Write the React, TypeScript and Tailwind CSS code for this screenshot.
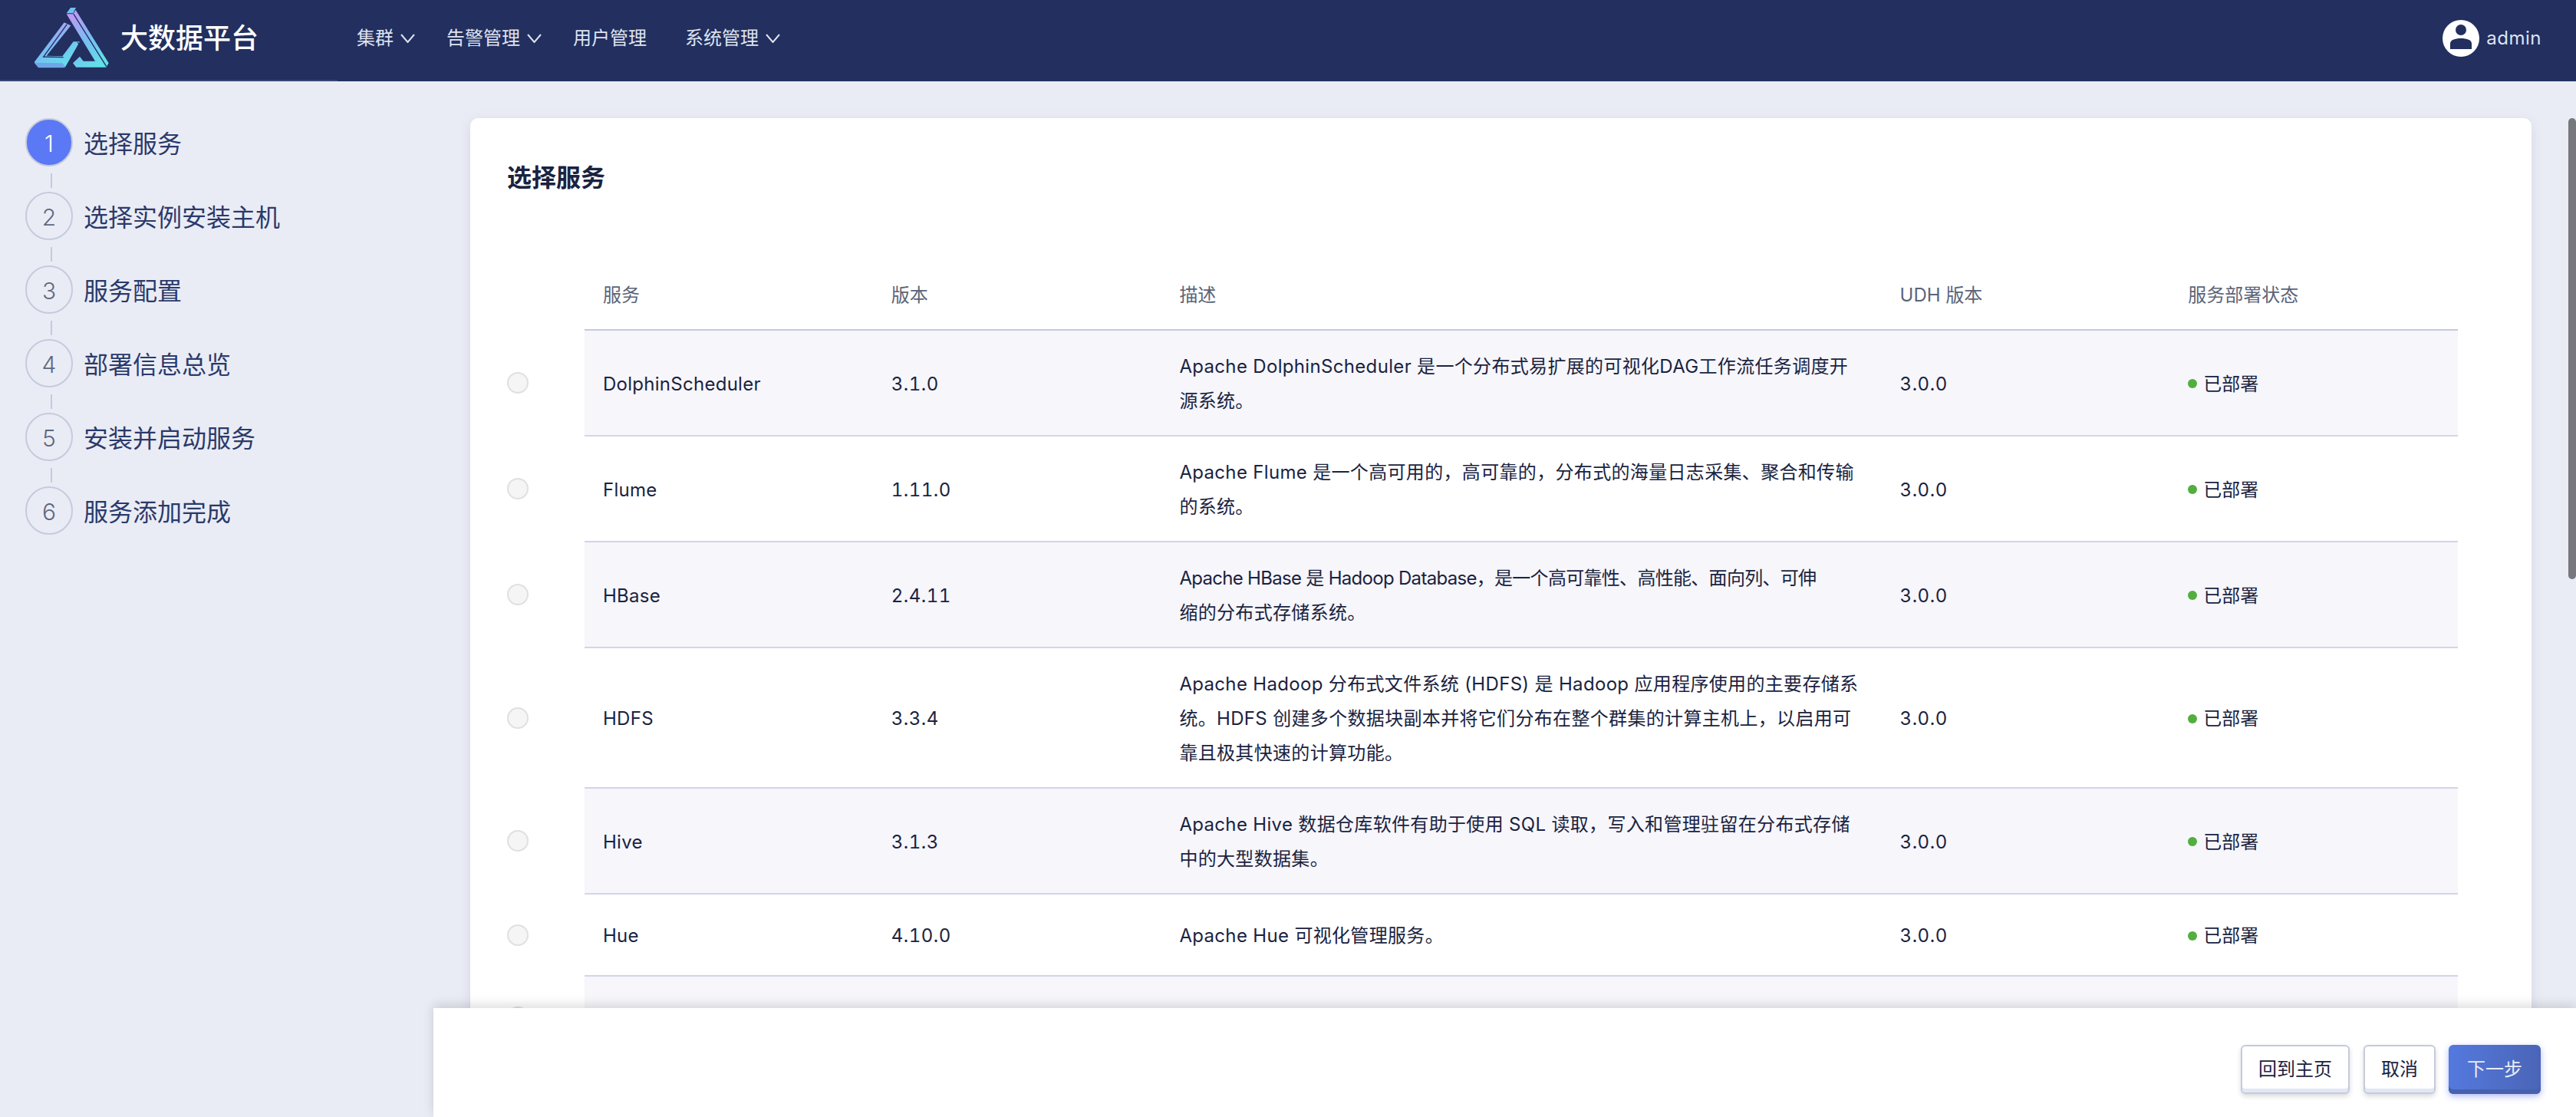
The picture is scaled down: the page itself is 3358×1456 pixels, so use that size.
const steps = ['选择服务', '选择实例安装主机', '服务配置', '部署信息总览', '安装并启动服务', '服务添加完成'];

const services = [
  { name: 'DolphinScheduler', version: '3.1.0', desc: ['Apache DolphinScheduler 是一个分布式易扩展的可视化DAG工作流任务调度开', '源系统。'] },
  { name: 'Flume', version: '1.11.0', desc: ['Apache Flume 是一个高可用的，高可靠的，分布式的海量日志采集、聚合和传输', '的系统。'] },
  { name: 'HBase', version: '2.4.11', desc: ['Apache HBase 是 Hadoop Database，是一个高可靠性、高性能、面向列、可伸', '缩的分布式存储系统。'], tight: true },
  { name: 'HDFS', version: '3.3.4', desc: ['Apache Hadoop 分布式文件系统 (HDFS) 是 Hadoop 应用程序使用的主要存储系', '统。HDFS 创建多个数据块副本并将它们分布在整个群集的计算主机上，以启用可', '靠且极其快速的计算功能。'] },
  { name: 'Hive', version: '3.1.3', desc: ['Apache Hive 数据仓库软件有助于使用 SQL 读取，写入和管理驻留在分布式存储', '中的大型数据集。'] },
  { name: 'Hue', version: '4.10.0', desc: ['Apache Hue 可视化管理服务。'] },
  { name: 'Kafka', version: '2.8.1', desc: ['Apache Kafka 分布式消息系统。'] },
];

function Logo() {
  return (
    <svg viewBox="0 0 336 270" className="w-[112px] h-[90px] shrink-0">
      <defs>
        <linearGradient id="logoFill" x1="0.25" y1="0" x2="0.8" y2="1">
          <stop offset="0" stopColor="#c09af5" />
          <stop offset="0.5" stopColor="#78bdf2" />
          <stop offset="1" stopColor="#5fe3e8" />
        </linearGradient>
      </defs>
      <polygon points="140,37 156,15 177,15 166,37" fill="#6fc3ee" />
      <polygon points="140,40 166,40 176,24 305,232 295,248 178,248 165,232 192,206 206,224 252,224" fill="url(#logoFill)" />
      <polygon points="131,73 157,85 62,203 124,205 167,148 192,148 136,246 28,246 14,228" fill="url(#logoFill)" />
      <polygon points="14,230 124,232 136,246 132,250 30,250" fill="#6fa6e8" />
      <path d="M142 80 L50 207 L128 209 M168 40 L296 245 M184 150 L205 186 M148 236 L178 208" stroke="#222f5f" strokeWidth="4" fill="none" />
    </svg>
  );
}

function UserIcon() {
  return (
    <svg viewBox="0 0 48 48" className="w-12 h-12 shrink-0">
      <circle cx="24" cy="24" r="24" fill="#fff" />
      <circle cx="24" cy="13" r="7" fill="#222f5f" />
      <path d="M10 38 V31 C10 26 16 24 24 24 C32 24 38 26 38 31 V38 Z" fill="#222f5f" />
    </svg>
  );
}

function NavItem({ label, menu = true }: { label: string; menu?: boolean }) {
  return (
    <div className="flex items-center text-2xl text-[#dfe3ef]">
      <span>{label}</span>
      {menu && (
        <svg viewBox="0 0 19 12" className="w-[19px] h-3 ml-[9px]">
          <path d="M1 1 L9.5 11 L18 1" fill="none" stroke="currentColor" strokeWidth="2" />
        </svg>
      )}
    </div>
  );
}

function Step({ n, label, last }: { n: number; label: string; last: boolean }) {
  const active = n === 1;
  return (
    <div>
      <div className="flex items-center">
        <div
          className={
            'w-[62px] h-[63px] pt-[3px] rounded-full border-2 border-[#c5cbdd] flex items-center justify-center text-[30px] font-light ' +
            (active ? 'bg-[#5b78f5] text-white' : 'text-[#5d6880]')
          }
        >
          {n}
        </div>
        <span className="ml-[14px] pt-1 text-[32px] text-[#2a3a6b]">{label}</span>
      </div>
      {!last && <div className="ml-[33px] mt-[9px] mb-[5px] w-[2px] h-[19px] bg-[#c5cbdd]" />}
    </div>
  );
}

export default function App() {
  return (
    <div className="relative flex flex-col h-[1456px] overflow-hidden bg-[#eaecf5] font-['Inter','Noto_Sans_CJK_SC',sans-serif]">
      <header className="flex items-center h-[106px] shrink-0 pl-[40px] pr-[45px] pb-[6px] bg-[#222f5f]">
        <Logo />
        <div className="ml-[5px] w-[181px] text-[36px] font-medium text-white whitespace-nowrap">大数据平台</div>
        <nav className="ml-[127px] flex items-center gap-[41px]">
          <NavItem label="集群" />
          <NavItem label="告警管理" />
          <div className="mr-[9px]">
            <NavItem label="用户管理" menu={false} />
          </div>
          <NavItem label="系统管理" />
        </nav>
        <div className="ml-auto flex items-center gap-[9px]">
          <UserIcon />
          <span className="text-2xl tracking-[0.5px] text-[#dfe3ef]">admin</span>
        </div>
      </header>
      <div className="w-[440px] h-[2px] -mt-[2px] bg-[#3b4675]" />

      <div className="flex flex-1 min-h-0">
        <aside className="w-[440px] shrink-0 pt-12 pl-[33px]">
          {steps.map((s, i) => (
            <Step key={s} n={i + 1} label={s} last={i === steps.length - 1} />
          ))}
        </aside>

        <main className="ml-[173px] mr-[58px] mt-12 flex-1 bg-white rounded-t-[10px] shadow-[0_4px_16px_rgba(30,40,80,0.1)] pl-12 pr-24">
          <h2 className="pt-[54px] text-[32px] leading-12 font-semibold text-[#1a2340]">选择服务</h2>
          <div className="mt-[83px] pl-[101px]">
            <div className="grid grid-cols-[2fr_2fr_5fr_2fr_2fr] items-center h-[92px] pt-[2px] border-b-2 border-[#c5cbdd] text-2xl text-[#5b6478]">
              <div className="px-6">服务</div>
              <div className="px-6">版本</div>
              <div className="px-6">描述</div>
              <div className="px-6">UDH 版本</div>
              <div className="px-6">服务部署状态</div>
            </div>
            {services.map((s, i) => (
              <div
                key={s.name}
                className={
                  'relative grid grid-cols-[2fr_2fr_5fr_2fr_2fr] items-center min-h-[107px] pt-6 pb-[22px] border-b-2 border-[#d2d5e8] text-2xl leading-[45px] text-[#1a2340] ' +
                  (i % 2 === 0 ? 'bg-[#f6f6fb]' : 'bg-white')
                }
              >
                <span className="absolute -left-[101px] top-1/2 -mt-[14px] w-7 h-7 rounded-full bg-[#f5f5f5] border-2 border-[#e0e0e2]" />
                <div className="px-6 tracking-[0.27px]">{s.name}</div>
                <div className="px-6 tracking-[0.5px] tabular-nums">{s.version}</div>
                <div className="pl-6 tracking-[0.33px] whitespace-nowrap">
                  {s.desc.map((line, j) => (
                    <div key={j} className={s.tight && j === 0 ? 'tracking-[-0.7px]' : ''}>
                      {line}
                    </div>
                  ))}
                </div>
                <div className="px-6 tracking-[0.5px] tabular-nums">3.0.0</div>
                <div className="px-6 flex items-center">
                  <span className="w-3 h-3 rounded-full bg-[#52ae3f] mr-[8px]" />
                  已部署
                </div>
              </div>
            ))}
          </div>
        </main>
      </div>

      <div className="absolute right-0 top-[154px] w-[10px] h-[601px] rounded-full bg-[#77787d]" />

      <footer className="absolute left-[565px] right-0 bottom-0 h-[142px] bg-white shadow-[0_-4px_14px_rgba(0,0,0,0.14)] flex justify-end items-start pt-12 pr-[46px]">
        <button className="h-16 w-[142px] mr-[18px] rounded-md border-2 border-[#c5cbdd] bg-white text-2xl text-[#1a2340] shadow-[inset_0_-5px_0_#e2e6f5,0_3px_6px_rgba(0,0,0,0.15)]">
          回到主页
        </button>
        <button className="h-16 w-[94px] mr-[17px] rounded-md border-2 border-[#c5cbdd] bg-white text-2xl text-[#1a2340] shadow-[inset_0_-5px_0_#e2e6f5,0_3px_6px_rgba(0,0,0,0.15)]">
          取消
        </button>
        <button className="h-16 w-[120px] rounded-md bg-linear-to-r from-[#5479de] to-[#4a65b7] text-2xl text-[#e8ecfa] shadow-[inset_0_-6px_0_#4661ad,0_3px_8px_rgba(80,100,240,0.45)]">
          下一步
        </button>
      </footer>
    </div>
  );
}
